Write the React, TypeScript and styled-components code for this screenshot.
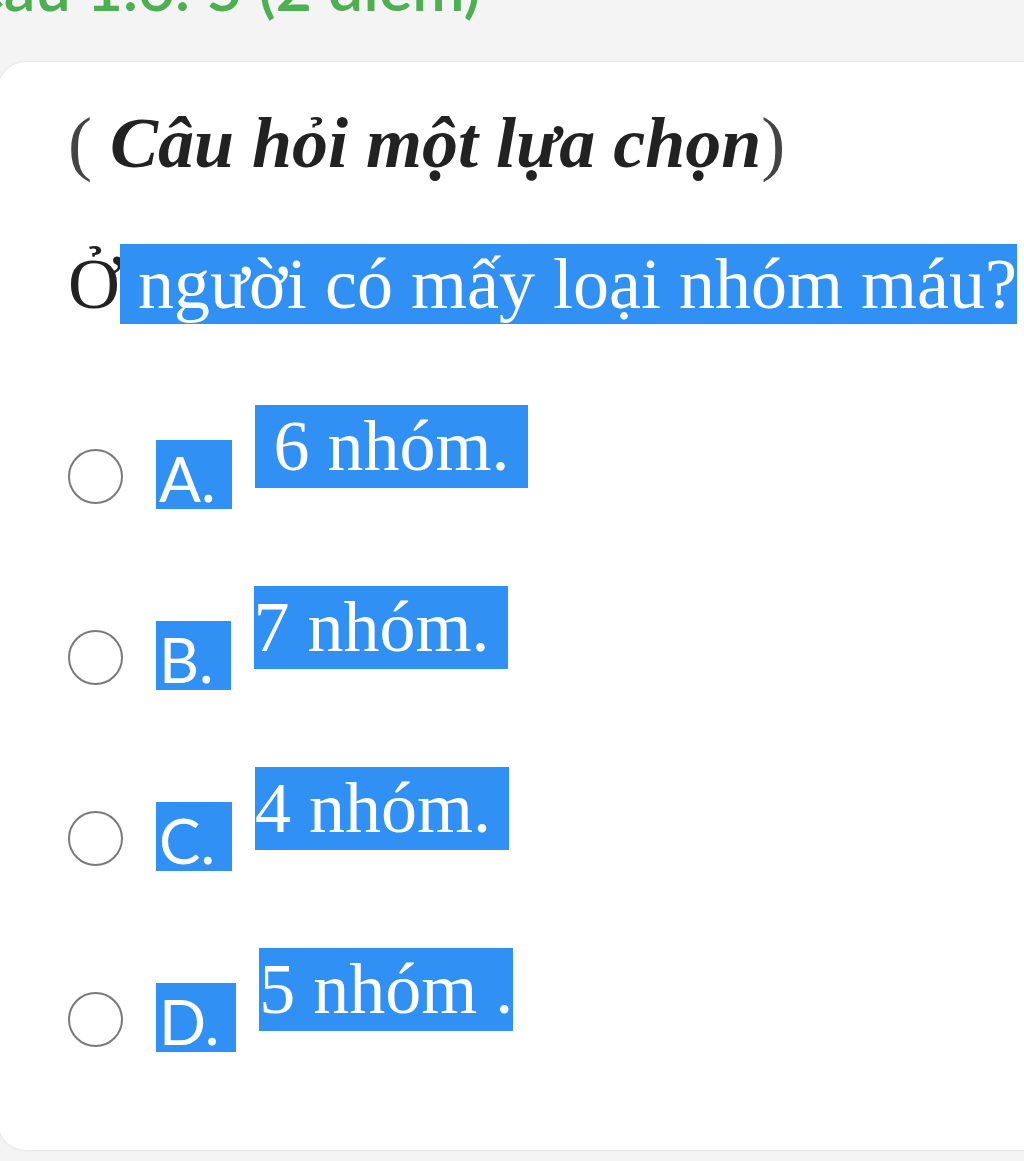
import styled, { createGlobalStyle } from "styled-components";

const GlobalStyle = createGlobalStyle`
  html, body {
    margin: 0;
    padding: 0;
    background: #f4f4f4;
    overflow: hidden;
  }
`;

const options = [
  { key: "A. ", text: " 6 nhóm. " },
  { key: "B. ", text: "7 nhóm. " },
  { key: "C. ", text: "4 nhóm. " },
  { key: "D. ", text: "5 nhóm ." },
];

const App = () => {
  return (
    <Page>
      <GlobalStyle />
      <TopBar>
        <Points>Câu 1.6: 5 (2 điểm)</Points>
      </TopBar>
      <Card>
        <Title>
          <Paren>( </Paren>Câu hỏi một lựa chọn<Paren>)</Paren>
        </Title>
        <Question>
          Ở<Selected> người có mấy loại nhóm máu?</Selected>
        </Question>
        <OptionList>
          {options.map((o) => (
            <OptionRow key={o.key}>
              <Radio />
              <OptionKey>{o.key}</OptionKey>
              <OptionText>{o.text}</OptionText>
            </OptionRow>
          ))}
        </OptionList>
      </Card>
    </Page>
  );
};

export default App;

const Page = styled.div`
  width: 1024px;
  height: 1161px;
  overflow: hidden;
  background: #f4f4f4;
`;

const TopBar = styled.div`
  height: 62px;
  overflow: hidden;
  margin-left: -38px;
`;

const Points = styled.div`
  margin-top: -44px;
  font-family: Lato, "Noto Sans", sans-serif;
  font-size: 63px;
  line-height: 62px;
  font-weight: 600;
  color: #4caf50;
  white-space: nowrap;
`;

const Card = styled.div`
  background: #ffffff;
  border-radius: 28px;
  margin: 0 -40px 0 -2px;
  padding: 40px 0 98px 70px;
  box-shadow: 0 0 3px rgba(0, 0, 0, 0.12);
`;

const Title = styled.div`
  font-family: "Liberation Serif", "Times New Roman", serif;
  font-size: 72px;
  line-height: 83px;
  font-weight: bold;
  font-style: italic;
  color: #222;
  white-space: nowrap;
`;

const Paren = styled.span`
  font-weight: normal;
  font-style: normal;
  color: #444;
`;

const Question = styled.div`
  margin-top: 58px;
  font-family: "Liberation Serif", "Times New Roman", serif;
  font-size: 72px;
  line-height: 83px;
  color: #222;
  white-space: pre;
`;

const Selected = styled.span`
  background: #3190f3;
  color: #ffffff;
`;

const OptionList = styled.div`
  margin-top: 79px;
  display: flex;
  flex-direction: column;
  gap: 77px;
`;

const OptionRow = styled.div`
  display: flex;
  align-items: flex-start;
`;

const Radio = styled.span`
  width: 51px;
  height: 51px;
  margin-top: 44px;
  border: 2.5px solid #7a7a7a;
  border-radius: 50%;
  flex-shrink: 0;
`;

const OptionKey = styled.span`
  display: inline-flex;
  align-items: flex-end;
  height: 69px;
  margin: 35px 0 0 33px;
  padding: 0 1px 0 3px;
  box-sizing: border-box;
  background: #3190f3;
  color: #ffffff;
  font-family: Lato, "Noto Sans", sans-serif;
  font-size: 62px;
  font-weight: 400;
  line-height: 1;
  white-space: pre;
`;

const OptionText = styled.span`
  display: inline-block;
  margin-left: 23px;
  background: #3190f3;
  color: #ffffff;
  font-family: "Liberation Serif", "Times New Roman", serif;
  font-size: 72px;
  line-height: 83px;
  white-space: pre;
`;
